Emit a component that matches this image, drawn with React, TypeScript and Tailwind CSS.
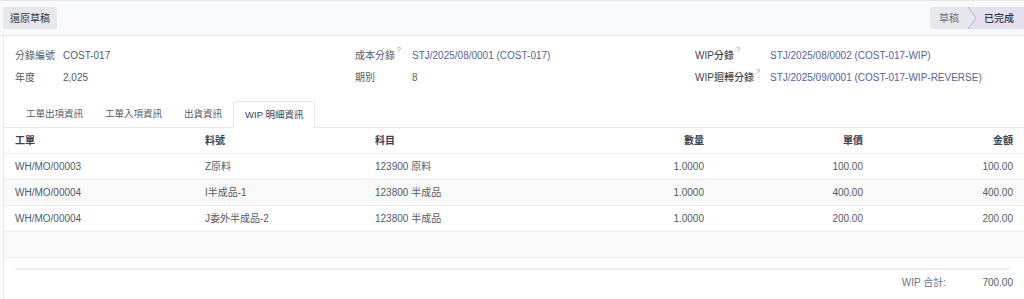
const ROWS = [
    { mo: 'WH/MO/00003', product: 'Z原料', account: '123900 原料', qty: '1.0000', price: '100.00', amount: '100.00' },
    { mo: 'WH/MO/00004', product: 'I半成品-1', account: '123800 半成品', qty: '1.0000', price: '400.00', amount: '400.00' },
    { mo: 'WH/MO/00004', product: 'J委外半成品-2', account: '123800 半成品', qty: '1.0000', price: '200.00', amount: '200.00' },
];

const TABS = ['工單出項資訊', '工單入項資訊', '出貨資訊', 'WIP 明細資訊'];

function Field({ label, value, labelW, link, help, bold }: { label: string; value: string; labelW: string; link?: boolean; help?: boolean; bold?: boolean }) {
    return (
        <div className="flex items-center h-[22px]">
            <div className={`${labelW} shrink-0 flex items-start ${bold ? 'font-medium text-[#3f4650]' : 'text-[#555b63]'}`}>
                <span>{label}</span>
                {help && <span className="text-[7px] leading-none text-[#7c8fb5] ml-[2px] mt-[-2px]">?</span>}
            </div>
            <div className={link ? 'text-[#5c5f95]' : 'text-[#555b63]'}>{value}</div>
        </div>
    );
}

export default function App() {
    return (
        <div
            className="w-[1024px] h-[299px] bg-white text-[10px] text-[#4b5563] overflow-hidden"
            style={{ fontFamily: '"Liberation Sans", "Noto Sans CJK TC", sans-serif' }}
        >
            {/* control bar */}
            <div className="h-[36px] bg-[#f8f9fa] border-t border-b border-[#e5e7eb] flex items-center justify-between pl-[3px]">
                <button className="h-[22px] px-[7px] rounded-[3px] bg-[#e6e8eb] text-[#2f3640] text-[10px]">
                    還原草稿
                </button>
                <div className="flex h-[22px] items-stretch">
                    <div className="w-[38px] bg-[#e6e8eb] text-[#6b7280] flex items-center justify-center rounded-l-[3px]">草稿</div>
                    <div className="relative w-[56px] bg-[#e4e0f0] text-[#2f3640] font-medium flex items-center justify-center pl-[6px]">
                        <svg className="absolute left-0 top-0" width="9" height="22" viewBox="0 0 9 22">
                            <polygon points="0,0 8,11 0,22" fill="#e6e8eb" />
                            <polyline points="0,0 8,11 0,22" fill="none" stroke="#b8b2d0" strokeWidth="1" />
                        </svg>
                        已完成
                    </div>
                </div>
            </div>

            {/* sheet */}
            <div className="ml-[3px] border-l border-[#e5e7eb] h-[263px]">
                <div className="grid grid-cols-[340px_340px_1fr] pl-[11px] pt-[8px]">
                    <div>
                        <Field label="分錄編號" value="COST-017" labelW="w-[48px]" />
                        <Field label="年度" value="2,025" labelW="w-[48px]" />
                    </div>
                    <div>
                        <Field label="成本分錄" value="STJ/2025/08/0001 (COST-017)" labelW="w-[57px]" link help />
                        <Field label="期別" value="8" labelW="w-[57px]" />
                    </div>
                    <div>
                        <Field label="WIP分錄" value="STJ/2025/08/0002 (COST-017-WIP)" labelW="w-[75px]" link help bold />
                        <Field label="WIP迴轉分錄" value="STJ/2025/09/0001 (COST-017-WIP-REVERSE)" labelW="w-[75px]" link help bold />
                    </div>
                </div>

                {/* tabs */}
                <div className="mt-[14px] flex items-end h-[26px] border-b border-[#e5e7eb] pl-[11px] text-[9.5px]">
                    {TABS.map((t, i) => (
                        <div
                            key={t}
                            className={`flex items-center px-[11px] ${i === 3
                                ? 'border border-b-0 border-[#e5e7eb] bg-white text-[#374151] rounded-t-[3px] mb-[-1px] h-[27px]'
                                : 'text-[#555b63] h-[26px]'}`}
                        >
                            {t}
                        </div>
                    ))}
                </div>

                {/* table */}
                <table className="w-full table-fixed border-collapse">
                    <colgroup>
                        <col className="w-[190px]" />
                        <col className="w-[170px]" />
                        <col className="w-[220px]" />
                        <col className="w-[132px]" />
                        <col className="w-[159px]" />
                        <col />
                    </colgroup>
                    <thead>
                        <tr className="h-[25px] border-b border-[#eceef1] text-[#374151]">
                            <th className="text-left font-semibold pl-[11px]">工單</th>
                            <th className="text-left font-semibold pl-[11px]">料號</th>
                            <th className="text-left font-semibold pl-[11px]">科目</th>
                            <th className="text-right font-semibold pr-[12px]">數量</th>
                            <th className="text-right font-semibold pr-[12px]">單價</th>
                            <th className="text-right font-semibold pr-[11px]">金額</th>
                        </tr>
                    </thead>
                    <tbody className="text-[#555b63]">
                        {ROWS.map((r, i) => (
                            <tr key={i} className={`h-[26px] border-b border-[#eceef1] ${i === 1 ? 'bg-[#f9f9fa]' : 'bg-white'}`}>
                                <td className="pl-[11px]">{r.mo}</td>
                                <td className="pl-[11px]">{r.product}</td>
                                <td className="pl-[11px]">{r.account}</td>
                                <td className="text-right pr-[12px]">{r.qty}</td>
                                <td className="text-right pr-[12px]">{r.price}</td>
                                <td className="text-right pr-[11px]">{r.amount}</td>
                            </tr>
                        ))}
                        <tr className="h-[26px] border-b border-[#eceef1] bg-[#f9f9fa]">
                            <td colSpan={6} />
                        </tr>
                    </tbody>
                </table>

                {/* totals */}
                <div className="ml-[11px] mr-[14px] mt-[10px] border-t-2 border-[#eef0f2]" />
                <div className="flex justify-end items-center h-[26px] pr-[11px] text-[#555b63]">
                    <span className="text-[#6b7280]">WIP 合計:</span>
                    <span className="w-[67px] text-right">700.00</span>
                </div>
            </div>
        </div>
    );
}
